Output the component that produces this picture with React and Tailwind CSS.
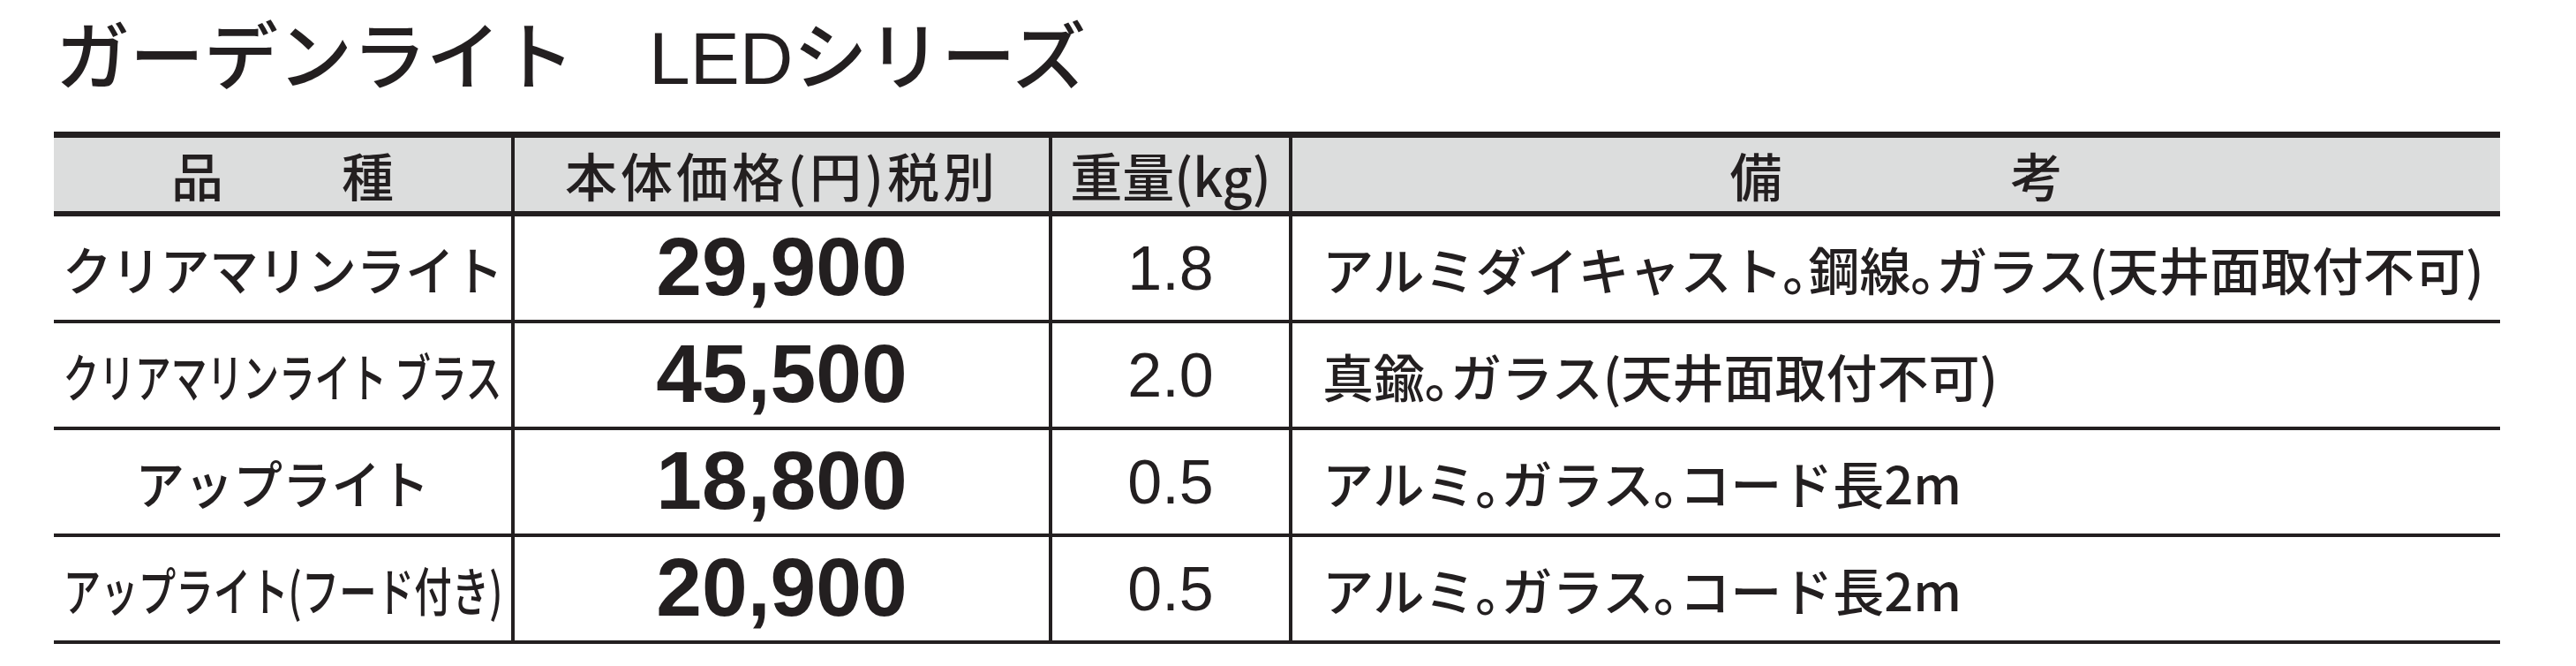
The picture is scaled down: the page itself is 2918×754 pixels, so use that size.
const jp = { fontFamily: '"Noto Sans CJK JP", "Liberation Sans", sans-serif' };
const num = { fontFamily: '"Liberation Sans", Arial, sans-serif' };

const rows = [
  { name: "クリアマリンライト", squeeze: "scale-x-[0.94]", price: "29,900", weight: "1.8", note: "アルミダイキャスト｡鋼線｡ガラス(天井面取付不可)" },
  { name: "クリアマリンライト ブラス", squeeze: "scale-x-[0.69]", price: "45,500", weight: "2.0", note: "真鍮｡ガラス(天井面取付不可)" },
  { name: "アップライト", squeeze: "scale-x-[0.94]", price: "18,800", weight: "0.5", note: "アルミ｡ガラス｡コード長2m" },
  { name: "アップライト(フード付き)", squeeze: "scale-x-[0.72]", price: "20,900", weight: "0.5", note: "アルミ｡ガラス｡コード長2m" },
];

function Row({ row }) {
  return (
    <div className="flex h-[121px] border-b-4 border-[#231f20] text-[#231f20]">
      <div className="flex w-[522px] items-center justify-center overflow-visible border-r-4 border-[#231f20]" style={jp}>
        <span className={`inline-block shrink-0 whitespace-nowrap text-[59px] font-medium leading-none ${row.squeeze}`}>{row.name}</span>
      </div>
      <div className="flex w-[609px] items-center justify-center border-r-4 border-[#231f20] pb-[2px]" style={num}>
        <span className="text-[93px] font-bold leading-none">{row.price}</span>
      </div>
      <div className="flex w-[272px] items-center justify-center border-r-4 border-[#231f20]" style={num}>
        <span className="text-[70px] leading-none">{row.weight}</span>
      </div>
      <div className="flex flex-1 items-center pl-[34px]" style={jp}>
        <span className="whitespace-nowrap text-[58px] font-medium leading-none">{row.note}</span>
      </div>
    </div>
  );
}

export default function App() {
  return (
    <div className="h-[754px] w-[2918px] bg-white pl-[61px] pr-[86px] pt-[24px]">
      {/* title */}
      <h1 className="ml-[2px] flex h-[125px] items-start whitespace-nowrap text-[84px] font-medium leading-none text-[#231f20]" style={{ fontFamily: '"Liberation Sans", "Noto Sans CJK JP", sans-serif' }}>
        <span>ガーデンライト</span>
        <span className="ml-[84px]">LEDシリーズ</span>
      </h1>

      {/* table */}
      <div className="border-t-[7px] border-[#231f20]">
        <div className="flex h-[89px] border-b-[6px] border-[#231f20] bg-[#dcdddd] text-[#231f20]" style={jp}>
          <div className="flex w-[522px] items-center justify-center gap-[134px] border-r-4 border-[#231f20] text-[59px] font-medium leading-none">
            <span>品</span>
            <span>種</span>
          </div>
          <div className="flex w-[609px] items-center justify-center border-r-4 border-[#231f20] text-[59px] font-medium leading-none tracking-[4px]">
            本体価格(円)税別
          </div>
          <div className="flex w-[272px] items-center justify-center border-r-4 border-[#231f20] text-[59px] font-medium leading-none">
            重量(kg)
          </div>
          <div className="flex flex-1 items-center justify-center gap-[259px] text-[59px] font-medium leading-none">
            <span>備</span>
            <span>考</span>
          </div>
        </div>
        {rows.map((row) => (
          <Row key={row.name} row={row} />
        ))}
      </div>
    </div>
  );
}
